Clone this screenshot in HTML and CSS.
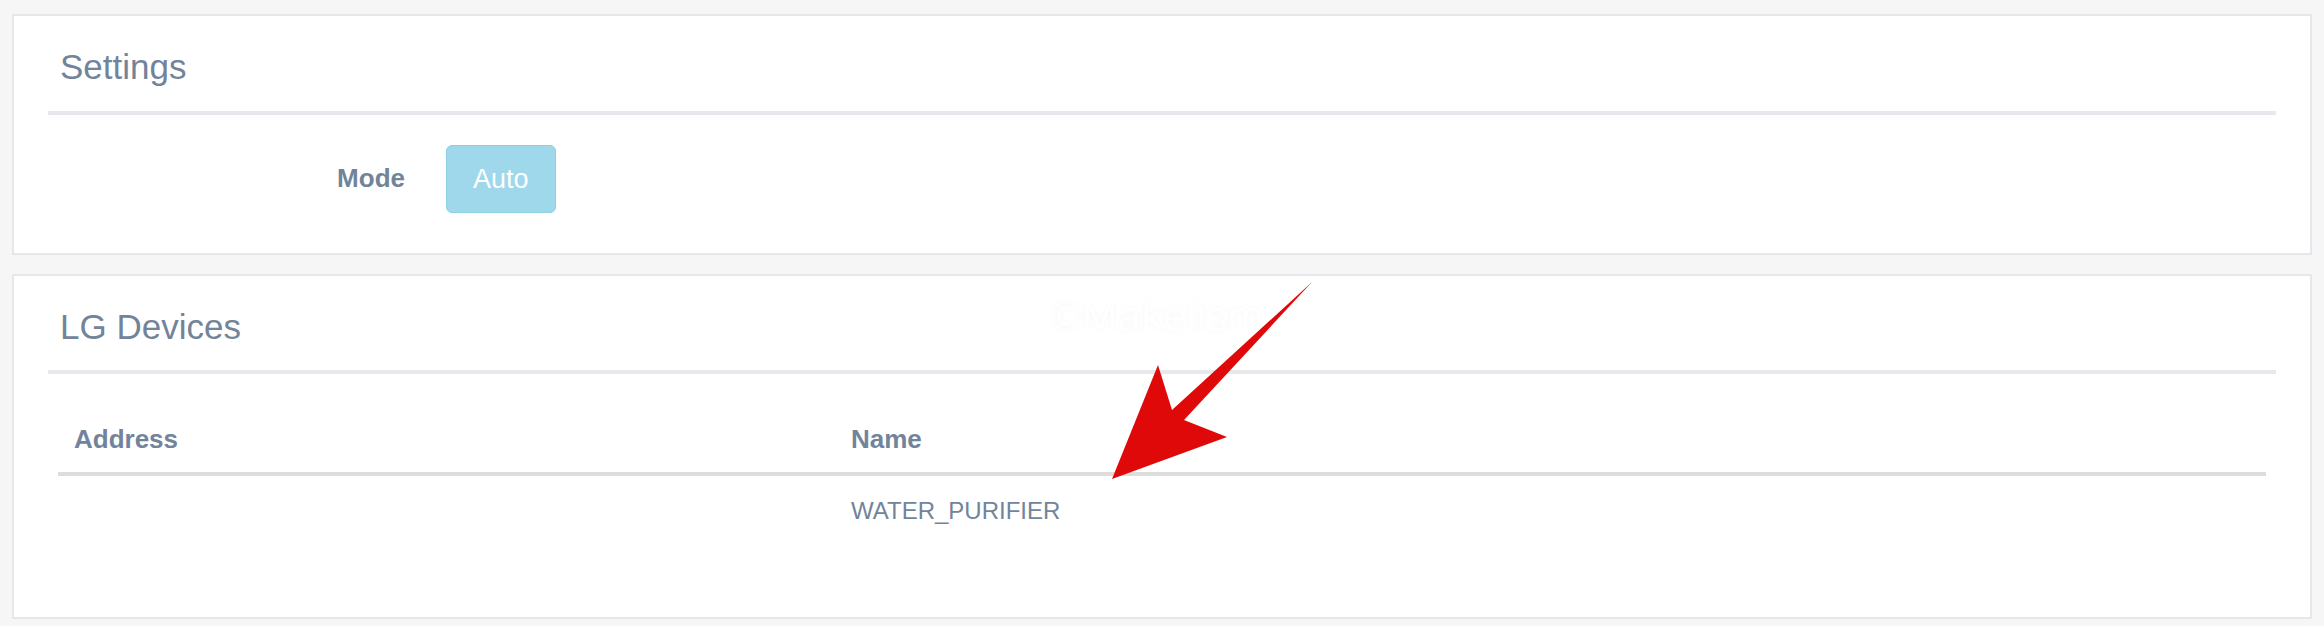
FILE: index.html
```html
<!DOCTYPE html>
<html lang="en">
<head>
  <meta charset="UTF-8" />
  <meta name="viewport" content="width=device-width, initial-scale=1.0"/>
  <title>Settings</title>
  <link rel="stylesheet" href="styles.css">
</head>
<body>
  <div class="panel">
    <h3 class="panel-title">Settings</h3>
    <hr>
    <div class="form-row">
      <label class="form-label">Mode</label>
      <button class="btn-mode">Auto</button>
    </div>
  </div>

  <div class="panel panel-devices">
    <h3 class="panel-title">LG Devices</h3>
    <hr>
    <table class="devices">
      <thead>
        <tr>
          <th class="col-address">Address</th>
          <th>Name</th>
        </tr>
      </thead>
      <tbody>
        <tr>
          <td></td>
          <td>WATER_PURIFIER</td>
        </tr>
      </tbody>
    </table>

    <div class="watermark">©Makelism</div>

    <svg class="arrow" width="220" height="210" viewBox="0 0 220 210">
      <polygon points="212,6 84,144 127,161 12,203 58,89 72,134" fill="#e00909"/>
    </svg>
  </div>
</body>
</html>
```

FILE: styles.css
```css
* {
  box-sizing: border-box;
}

body {
  margin: 0;
  padding: 14px 12px 0;
  background-color: #f6f6f6;
  font-family: "Liberation Sans", Helvetica, Arial, sans-serif;
  color: #72849a;
}

.panel {
  position: relative;
  background: #fff;
  border: 2px solid #e6e6ec;
  padding: 32px 34px 40px;
  margin-bottom: 19px;
}

.panel-title {
  margin: 0 0 24px;
  padding-left: 12px;
  font-size: 35px;
  font-weight: 400;
  line-height: 38.5px;
}

hr {
  margin: 0;
  border: 0;
  height: 4px;
  background: #e7e7ec;
}

.form-row {
  display: flex;
  align-items: center;
  gap: 41px;
  margin-top: 30px;
}

.form-label {
  width: 357px;
  text-align: right;
  font-size: 26px;
  font-weight: 700;
}

.btn-mode {
  height: 68px;
  padding: 0 26px;
  border: 1px solid #8ecfe3;
  border-radius: 6px;
  background: #9ed8ea;
  color: #fff;
  font-family: inherit;
  font-size: 27px;
  line-height: 66px;
}

.panel-devices {
  padding-bottom: 89px;
}

.devices {
  width: calc(100% - 20px);
  margin: 34px 10px 0;
  border-collapse: collapse;
  text-align: left;
}

.devices th {
  padding: 13px 16px 14px;
  font-size: 26px;
  font-weight: 700;
  line-height: 37px;
  border-bottom: 4px solid #dddddd;
}

.devices .col-address {
  width: 777px;
}

.devices td {
  padding: 18px 16px 0;
  font-size: 24px;
  line-height: 34px;
}

.watermark {
  position: absolute;
  left: 1036px;
  top: 19px;
  font-size: 43px;
  line-height: 43px;
  color: #fff;
  text-shadow: 0 0 5px rgba(0, 0, 0, 0.035);
}

.arrow {
  position: absolute;
  left: 1086px;
  top: 0;
}
```
